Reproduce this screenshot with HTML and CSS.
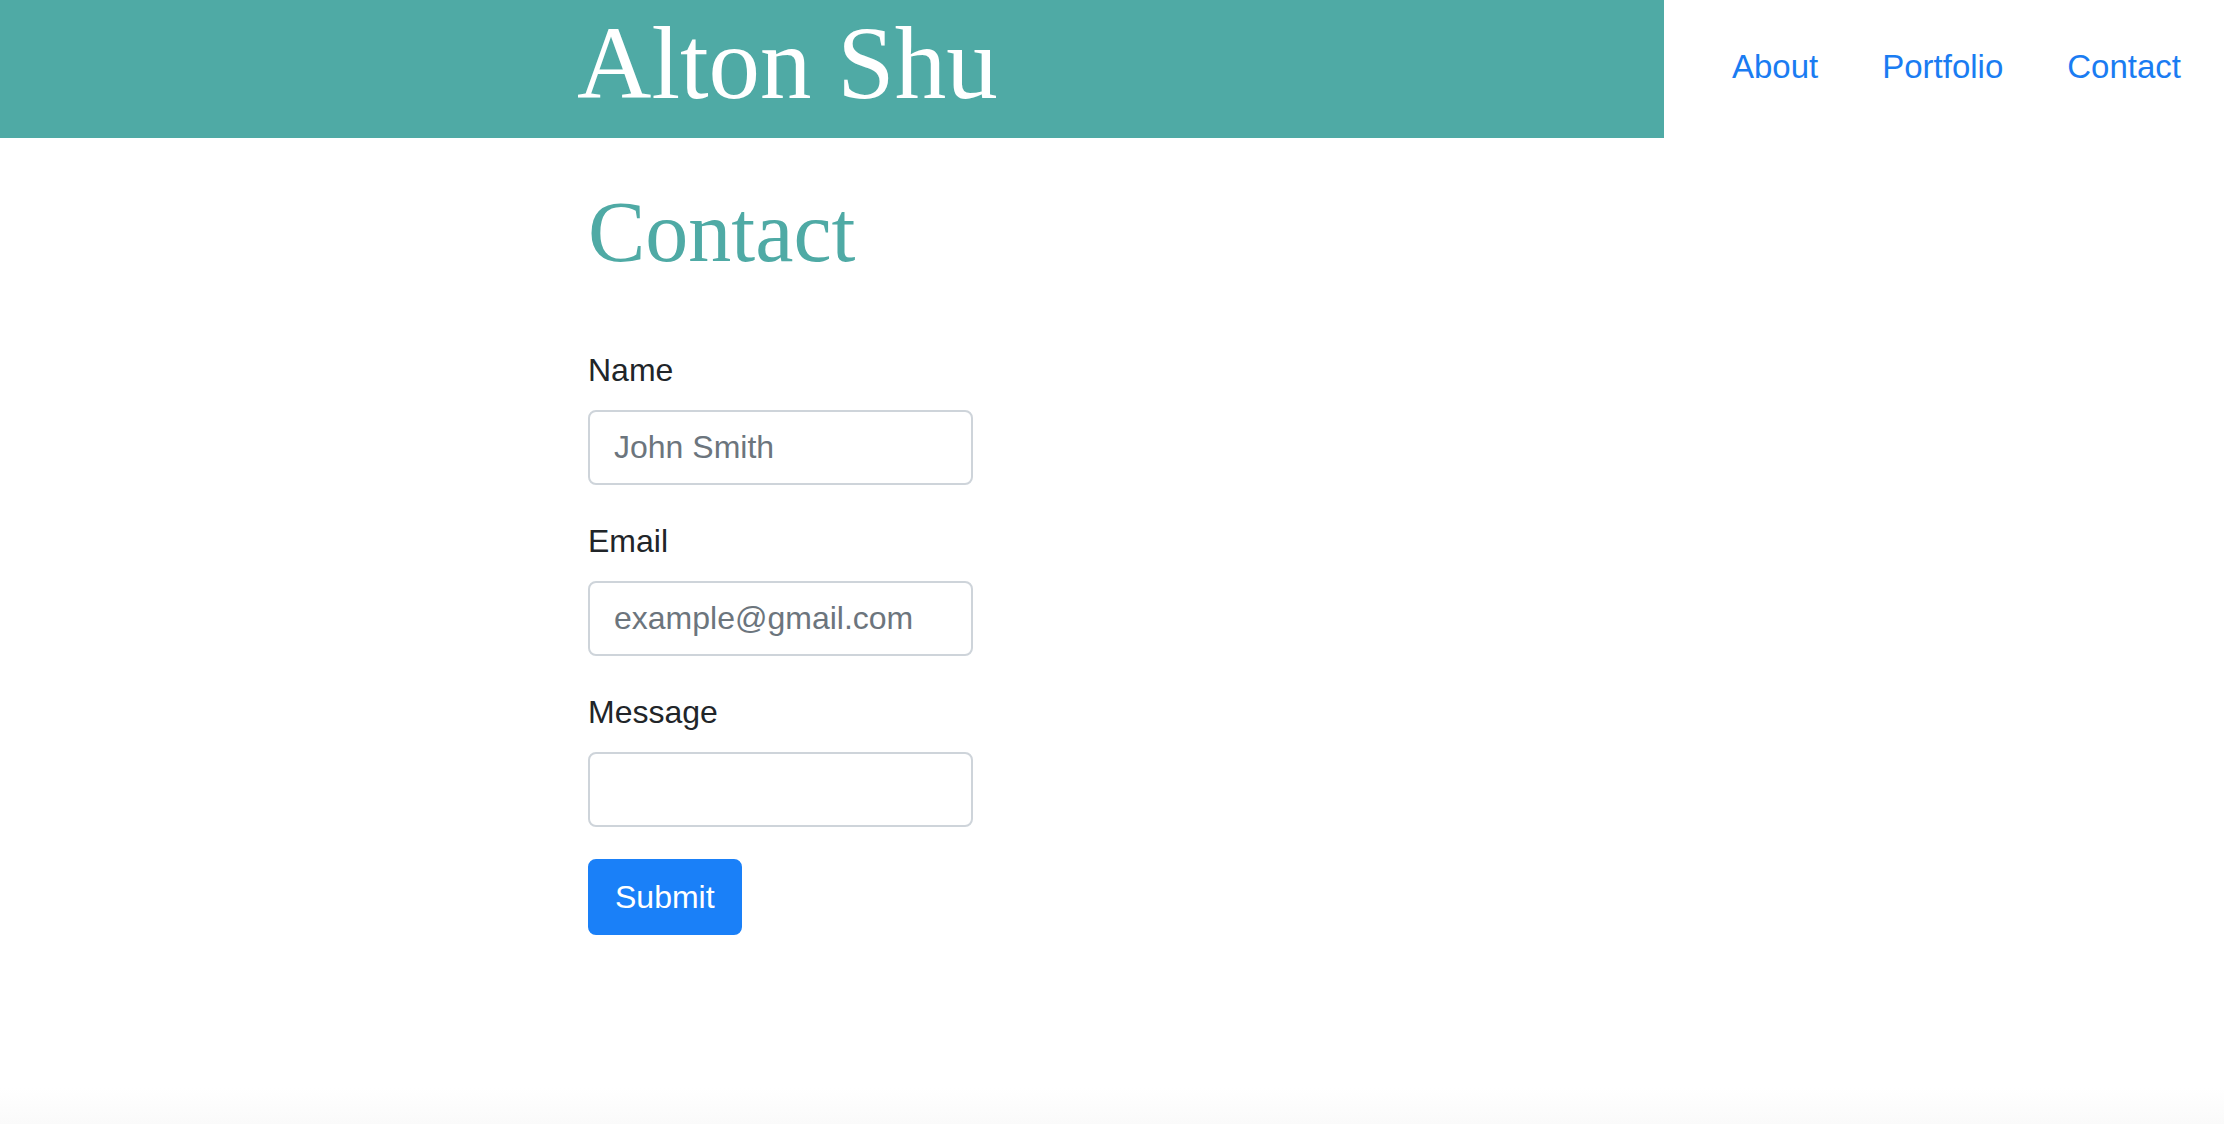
FILE: index.html
```html
<!DOCTYPE html>
<html lang="en">
<head>
<meta charset="utf-8">
<title>Alton Shu - Contact</title>
<link rel="stylesheet" href="styles.css">
</head>
<body>
<header class="site-header">
  <div class="brand-bar">
    <h1 class="brand">Alton Shu</h1>
  </div>
  <nav class="site-nav">
    <a class="nav-link" href="#">About</a>
    <a class="nav-link" href="#">Portfolio</a>
    <a class="nav-link" href="#">Contact</a>
  </nav>
</header>
<main class="content">
  <h2 class="page-title">Contact</h2>
  <form class="contact-form">
    <div class="form-group">
      <label class="form-label" for="name">Name</label>
      <input class="form-control" id="name" type="text" placeholder="John Smith">
    </div>
    <div class="form-group">
      <label class="form-label" for="email">Email</label>
      <input class="form-control" id="email" type="email" placeholder="example@gmail.com">
    </div>
    <div class="form-group">
      <label class="form-label" for="message">Message</label>
      <textarea class="form-control form-textarea" id="message" rows="1"></textarea>
    </div>
    <button class="btn-submit" type="button">Submit</button>
  </form>
</main>
</body>
</html>
```

FILE: styles.css
```css
* {
  box-sizing: border-box;
}

html, body {
  margin: 0;
  padding: 0;
}

body {
  min-height: 1124px;
  font-family: "Liberation Sans", Arial, sans-serif;
  color: #212529;
  background: linear-gradient(to bottom, #ffffff 0, #ffffff 1088px, #fafafa 1124px);
}

.site-header {
  display: flex;
  height: 138px;
}

.brand-bar {
  width: 1664px;
  height: 138px;
  background: #4faaa5;
  padding: 12px 0 0 577px;
}

.brand {
  margin: 0;
  font-family: "Liberation Serif", "Times New Roman", serif;
  font-weight: 400;
  font-size: 103px;
  line-height: 103px;
  color: #ffffff;
}

.site-nav {
  flex: 1;
  display: flex;
  justify-content: flex-end;
  align-items: flex-start;
  padding: 43px 11px 0 0;
}

.nav-link {
  display: block;
  padding: 0 32px;
  font-size: 33px;
  line-height: 48px;
  color: #1a7cf2;
  text-decoration: none;
}

.content {
  padding-left: 588px;
}

.page-title {
  margin: 43px 0 62px;
  font-family: "Liberation Serif", "Times New Roman", serif;
  font-weight: 400;
  font-size: 86px;
  line-height: 103px;
  color: #4faaa5;
}

.contact-form {
  width: 385px;
}

.form-group {
  margin-bottom: 32px;
}

.form-label {
  display: block;
  margin-bottom: 16px;
  font-size: 32px;
  line-height: 48px;
  color: #212529;
}

.form-control {
  display: block;
  width: 385px;
  height: 75px;
  margin: 0;
  padding: 12px 24px;
  font-family: "Liberation Sans", Arial, sans-serif;
  font-size: 32px;
  line-height: 48px;
  color: #495057;
  background: #ffffff;
  border: 2px solid #ced4da;
  border-radius: 8px;
  outline: none;
}

.form-control::placeholder {
  color: #6c757d;
  opacity: 1;
}

.form-textarea {
  resize: none;
  overflow: hidden;
}

.btn-submit {
  display: inline-block;
  margin: 0;
  padding: 12px 25px;
  font-family: "Liberation Sans", Arial, sans-serif;
  font-size: 32px;
  line-height: 48px;
  color: #ffffff;
  background: #1a80f8;
  border: 2px solid #1a80f8;
  border-radius: 8px;
  cursor: pointer;
}
```
